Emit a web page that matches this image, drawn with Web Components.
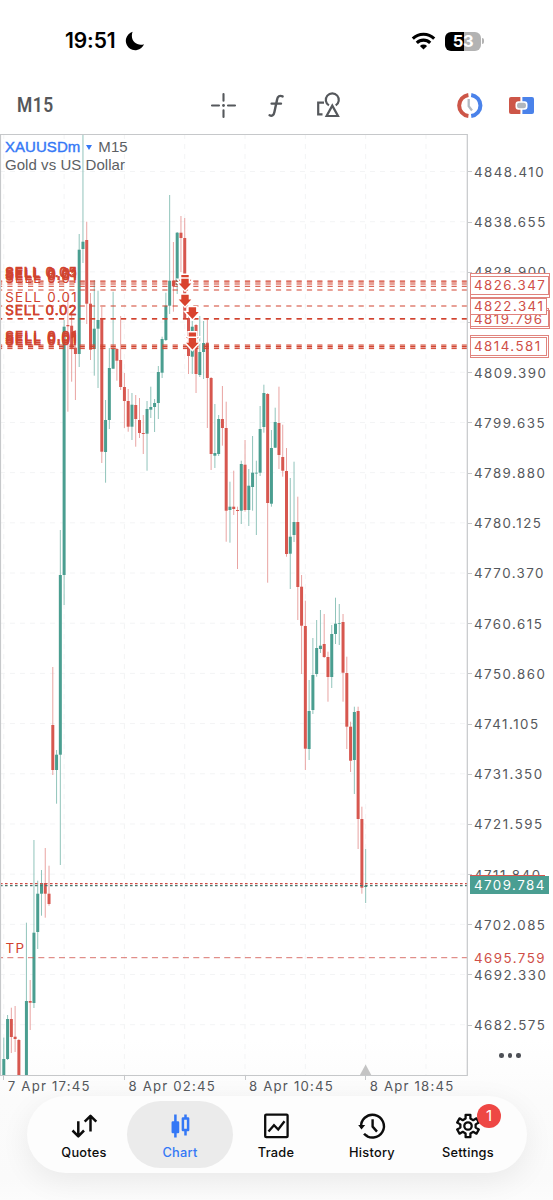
<!DOCTYPE html>
<html lang="en">
<head>
<meta charset="utf-8">
<title>XAUUSDm, M15</title>
<style>
    html, body { margin: 0; padding: 0; }
    body {
        width: 553px;
        height: 1200px;
        overflow: hidden;
        background: #fff;
        font-family: Inter, "Liberation Sans", sans-serif;
        color: #55585c;
    }
</style>
</head>
<body>
<trade-app></trade-app>

<template id="status-tpl">
    <style>
        :host { display: flex; height: 82px; box-sizing: border-box; padding: 0 69px 0 65px; align-items: center; color: #000; }
        .time { font-size: 21px; font-weight: 600; letter-spacing: -0.1px; line-height: 24px; width: 58px; white-space: nowrap; }
        .moon { margin-left: 2px; }
        .spacer { flex: 1; }
        .wifi { margin-right: 9px; }
        .battery {
            width: 36px; height: 19px; border-radius: 6px; text-align: center;
            background: linear-gradient(90deg, #000 19px, #b3b3b3 19px);
            color: #fff; font-size: 16.5px; font-weight: 700; line-height: 19.5px; letter-spacing: -0.4px;
        }
        .nub { width: 2px; height: 6px; border-radius: 0 2px 2px 0; background: #b3b3b3; margin-left: 1px; }
    </style>
    <span class="time">19:51</span>
    <svg class="moon" width="20" height="20" viewBox="0 0 20 20"><path d="M7.6 .8A9.4 9.4 0 1 0 19 13.2C12 15.6 4.4 9.6 7.6 .8Z"/></svg>
    <span class="spacer"></span>
    <svg class="wifi" width="25" height="18" viewBox="0 0 25 18" fill="none" stroke="#000" stroke-width="3.1">
        <path d="M1.8 6.6A15.4 15.4 0 0 1 23.2 6.6"/>
        <path d="M5.8 10.8A9.6 9.6 0 0 1 19.2 10.8"/>
        <path d="M12.5 17.6L8.9 13.9A5.2 5.2 0 0 1 16.1 13.9Z" fill="#000" stroke="none"/>
    </svg>
    <div class="battery">53</div><div class="nub"></div>
</template>

<template id="toolbar-tpl">
    <style>
        :host { display: grid; grid-template-columns: 210px 51px 54px 141px 52px 1fr; height: 52px; align-items: center; }
        .period { margin-top: -6px; padding-left: 17px; font-family: Roboto, sans-serif; font-size: 20.5px; font-weight: 600; letter-spacing: .6px; color: #55575a; line-height: 24px; }
        .period span { display: inline-block; transform: scaleX(.85); transform-origin: 0 50%; }
        svg { display: block; margin-top: -5px; }
    </style>
    <div class="period"><span>M15</span></div>
    <svg width="27" height="27" viewBox="0 0 27 27" stroke="#55585c" stroke-width="2.1" stroke-linecap="round">
        <path d="M2 13.5H9M18 13.5H25M13.5 2V8.8M13.5 18.2V25"/><circle cx="13.5" cy="13.5" r="1.4" fill="#55585c" stroke="none"/>
    </svg>
    <svg width="30" height="27" viewBox="0 0 30 27" fill="none" stroke="#55585c" stroke-width="2.4" stroke-linecap="round">
        <path d="M21.6 4.4C18.6 3 16.7 4.4 16.1 7.4L13.4 20C12.8 23.3 11 24.5 8.6 23.3M10.6 11.6H20"/>
    </svg>
    <svg width="27" height="27" viewBox="0 0 27 27" fill="none" stroke="#55585c" stroke-width="2.2">
        <path d="M9 10.6H3.2V22.4H7.5"/>
        <path d="M13.9 13.4A6.5 6.5 0 1 1 20.7 13.4"/>
        <path d="M17.3 13.6L11.6 24H23Z"/>
    </svg>
    <svg width="27" height="27" viewBox="0 0 27 27" fill="none">
        <path d="M12.4 2.9A10.7 10.7 0 0 0 12.4 24.1" stroke="#cd5648" stroke-width="4"/>
        <path d="M15.2 2.9A10.7 10.7 0 0 1 15.2 24.1" stroke="#4a82ea" stroke-width="4"/>
        <path d="M12.7 7V14.2L16 18.5" stroke="#b2bac3" stroke-width="2.3"/>
    </svg>
    <svg width="27" height="27" viewBox="0 0 27 27">
        <path d="M3 5H12.4V22H3A2 2 0 0 1 1 20V7A2 2 0 0 1 3 5Z" fill="#cd5648"/>
        <path d="M14.4 5H24A2 2 0 0 1 26 7V20A2 2 0 0 1 24 22H14.4Z" fill="#4a82ea"/>
        <rect x="7.5" y="9.3" width="12" height="8.4" rx="3" fill="#fff"/>
        <rect x="9" y="10.8" width="9" height="5.4" rx="2.2" fill="#b0b6bd"/>
    </svg>
</template>

<template id="nav-tpl">
    <style>
        :host {
            display: grid; grid-template-columns: repeat(5, 96px); justify-content: center;
            width: 500px; height: 77px; margin: 0 0 0 27px; border-radius: 39px; box-sizing: border-box; padding-right: 2px;
            background: #fdfdfd; box-shadow: 0 8px 30px rgba(0, 0, 0, .07);
        }
    </style>
    <slot></slot>
</template>

<template id="nav-item-tpl">
    <style>
        :host { position: relative; display: flex; flex-direction: column; align-items: center; color: #0c0c0c; padding-top: 15px; }
        :host([selected]) { color: #3478f6; }
        :host([selected])::before { content: ""; position: absolute; inset: 5px -5px; border-radius: 34px; background: #ebebeb; }
        .icon { position: relative; height: 30px; }
        .label { position: relative; font-size: 12.8px; font-weight: 500; line-height: 16px; margin-top: 3.5px; letter-spacing: .25px; }
        .badge {
            position: absolute; left: 57px; top: 7.5px; width: 24px; height: 24px; border-radius: 50%;
            background: #ee4744; color: #fff; text-align: center; font-size: 15px; line-height: 24px;
        }
        .badge:empty { display: none; }
    </style>
    <div class="icon"><slot></slot></div>
    <div class="label"></div>
    <div class="badge"></div>
</template>

<script>
// pixel geometry of the plot, in page coordinates
const PLOT = { top: 134, right: 467, bottom: 1075.5 };
const FIRST_PRICE = 4848.41;
const PRICE_STEP = 9.755;
const ROW = 50.19;
const ROW_TOP = 171.5;
const COL = 60.31;
const COL_LEFT = 3.8;

// [side, body top, body bottom, high, low], one per bar, null where there is none
const BARS = [
    ['g',1059,1075,1037.6,1075],['g',1019,1059,1015,1060],['r',1019,1037,1007.7,1053],['r',1036.7,1039,1006,1052],
    ['r',1040,1075,1039,1075],null,['g',1001,1075,922.7,1075],['r',1001,1002.7,980,1030],
    ['g',932.7,1003,840,1008],['g',893.7,932,880.7,949],['g',883,893.7,870,915.7],['r',883,893.7,848,917.7],
    ['r',893.7,904,865.7,905.7],['r',725,770,667,775],['g',754.7,770,750,803.7],['g',575,754.7,530,865],
    ['g',326.7,575,320,605],['r',325,326.3,295,411.7],['r',325.7,347.7,315,381.7],['r',347.7,354,330,400],
    ['g',249.7,354,234,367],['g',241.7,249,134,263],['r',240,303.7,221.7,324],['r',303.7,349.7,293,360],
    ['g',328.7,349,280,375.7],['g',320,328.7,290.7,388],['r',318,451.7,307,463],['g',420,452,400,482.7],
    ['g',368,420,348,429],['g',349,368.7,291.7,368.7],['r',349,360.7,348,380.7],['r',360,387,316,390],
    ['r',387,401,373,428],['r',401,426.7,389,431.7],['g',404.7,426.7,393,440],['r',405,419,395,446.7],
    ['r',420,433,398,438],['r',433,434,415,454],['g',409,433.7,401,470.7],['g',407,409.7,386.7,418],
    ['g',403,407,399,432],['g',372,403,366,419],['g',339,372.7,336.7,378],['g',305.7,340,292.7,341],
    ['g',280.7,305.7,195,314],['r',280.7,286,242,311.7],['g',232.7,285,232,294],['r',232.7,238,216,272],
    ['r',238,318,218,319],['r',318,356,310,374],['g',326.7,356.7,321,374],['r',325,374,324,393],
    ['g',352,375,316,377],['g',343,352,321,379],['r',342.7,378,319,428],['r',378,454,377,470],
    ['g',453,455.7,404,468],['g',419,454,415,456],['r',419,428,386,445.7],['r',428,510.7,401.7,541.7],
    ['g',506.7,510,481.7,542.7],['r',506.7,509,470.7,515],['r',510,511,506.7,569],['g',464,510.7,460.7,524],
    ['r',464.7,510,440,511.7],['g',485.7,510,469,526],['g',472.7,487,436,510.7],['g',472.7,473.5,460.7,535],
    ['g',429,472.7,406,476],['g',393,427,384.7,432.7],['r',394,503,393,582.7],['g',448,503.7,430,506.7],
    ['g',422,447.7,407.7,448],['r',423,455,386.7,469],['r',457,470.7,424.7,476.7],['r',471,554,448,556.7],
    ['g',536.7,553.7,478,589],['g',522,535,461.7,542],['r',522,587,496.7,620],['r',586.7,625.7,575,674],
    ['r',626,748.7,600.7,770],['g',711,749,680,760],['g',675,710,638,714],['g',648,674,620,676.7],
    ['g',645.7,649,610,653],['r',644,657,614,658],['r',657,677,651.7,701.7],['g',634,677,625,688],
    ['g',623.7,634,597.7,644],['g',623.3,624,604,645],['r',622,672.7,614,701.7],['r',673,726.7,656.7,749],
    ['r',726.7,760.7,721.7,772],['g',712,760,706.7,794],['r',711,819,706.7,849],['r',819,887.7,806.7,893.7],
    ['g',885.7,887,849,903]
];

// open positions: line y, line width, label, label weight
const ORDERS = [
    [281, 1.2, 'SELL 0.05', .7], [282, 1.2, 'SELL 0.01', .7], [284, 1.2, 'SELL 0.01', .7], [286.3, 1, 'SELL 0.01', 0],
    [290, 1, '', 0],
    [306, 1.2, 'SELL 0.01', 0],
    [318.5, 1.2, 'SELL 0.02', .3], [319.2, 1, 'SELL 0.02', .3],
    [345, 1, 'SELL 0.01', .7], [346.6, 1.8, 'SELL 0.01', .7], [348.6, 1, 'SELL 0.01', .7]
];

const ENTRIES = [[185, 275], [185, 278.7], [185, 294.7], [192.4, 307.3], [192.4, 332.5], [192.4, 338]];

function define(name, tplId) {
    customElements.define(name, class extends HTMLElement {
        constructor() {
            super();
            this.attachShadow({ mode: 'open' }).appendChild(document.getElementById(tplId).content.cloneNode(true));
        }
    });
}

class PriceChart extends HTMLElement {
    constructor() {
        super();
        this.attachShadow({ mode: 'open' }).innerHTML = `<style>
    :host { display: block; position: relative; }
    svg { display: block; }
    .title { position: absolute; left: 5px; top: 3.5px; font: 15px/18.5px "Liberation Sans", Arial, sans-serif; color: #5c5f64; white-space: nowrap; letter-spacing: .05px; }
    .symbol { color: #3478f6; -webkit-text-stroke: .4px #3478f6; }
    .caret { display: inline-block; width: 0; height: 0; border: 3px solid transparent; border-top: 5px solid #3478f6; border-bottom: 0; margin: 0 6px 2px 6px; }
    .order { font-size: 13.4px; fill: #d1432f; stroke: #d1432f; }
</style>
<svg width="468" height="942" viewBox="0 134 468 942">${this.grid()}${this.bars()}${this.orders()}
    <path d="M0 957.7H467" stroke="#cf4f48" stroke-width=".8" stroke-dasharray="6 4.33" stroke-dashoffset="3"/>
    <text class="order" x="5.5" y="953" textLength="18.5" stroke-width="0">TP</text>
    <path d="M0 883.6H467" stroke="#cf4f48" stroke-width="1.3" stroke-dasharray="2.6 2.4"/>
    <path d="M0 885.6H467" stroke="#47776f" stroke-width="1.3" stroke-dasharray="2.6 2.4"/>
    <path d="M365.6 1064.5L371.3 1075H359.9Z" fill="#c4c4c4"/>
    <path d="M.5 134V1075.5H467.3V134.5H0" fill="none" stroke="#c6c8ca" stroke-width="1.2"/>
</svg>
<div class="title"><span class="symbol">XAUUSDm</span><i class="caret"></i>M15<br>Gold vs US Dollar</div>`;
    }

    grid() {
        let d = '';
        for (let i = 0; i < 18; i++) d += `M0 ${ROW_TOP + i * ROW}H${PLOT.right}`;
        for (let i = 0; i < 8; i++) d += `M${COL_LEFT + i * COL} ${PLOT.top}V${PLOT.bottom}`;
        return `<path d="${d}" stroke="#f3f4f5" stroke-width="1" stroke-dasharray="5 5"/>`;
    }

    bars() {
        return BARS.map((b, i) => {
            if (!b) return '';
            const [side, top, bottom, high, low] = b;
            const x = COL_LEFT + i * COL / 16;
            const body = side === 'g' ? '#4a9e90' : '#d7574f';
            const wick = side === 'g' ? '#85bdb3' : '#e69a97';
            return `<path d="M${x.toFixed(2)} ${high}V${low}" stroke="${wick}" stroke-width=".9"/>` +
                `<rect x="${(x - 1.5).toFixed(2)}" y="${top}" width="3" height="${(bottom - top).toFixed(1)}" fill="${body}"/>`;
        }).join('');
    }

    orders() {
        const lines = ORDERS.map(([y, w, text, bold]) =>
            `<path d="M0 ${y}H${PLOT.right}" stroke="#d1432f" stroke-width="${w}" stroke-dasharray="5.2 5.13" stroke-dashoffset="3"/>` +
            (text ? `<text class="order" x="5.2" y="${y - 3.8}" textLength="71.5" stroke-width="${bold}">${text}</text>` : '')
        ).join('');
        const arrows = ENTRIES.map(([x, y]) =>
            `<path d="M${x - 3.7} ${y}h7.4v4.8h2.6l-6.3 6.8l-6.3 -6.8h2.6z" fill="#d9432e" stroke="#fff" stroke-width="2.8" paint-order="stroke"/>`
        ).join('');
        return lines + arrows;
    }
}
customElements.define('price-chart', PriceChart);

class PriceAxis extends HTMLElement {
    constructor() {
        super();
        let rows = '';
        for (let i = 0; i < 18; i++) rows += `<div class="row"><i></i>${(FIRST_PRICE - i * PRICE_STEP).toFixed(3)}</div>`;
        this.attachShadow({ mode: 'open' }).innerHTML = `<style>
    :host { display: block; position: relative; padding-top: 12.9px; font-size: 13.3px; letter-spacing: 1.48px; white-space: nowrap; }
    .row { display: flex; align-items: center; height: ${ROW}px; }
    .row i { width: 4px; height: 1px; background: #c6c8ca; margin-right: 2px; }
    .tag { position: absolute; left: 2px; box-sizing: border-box; width: 77px; height: 18px; line-height: 17px; padding-left: 3px; color: #cf4f48; background: #fff; border: 1px solid #e0837d; }
    .wide { width: 80px; }
    .mid { width: 78.5px; }
    .plain { border-color: transparent; background: none; }
    .bid { width: 79px; background: #4a9e92; border-color: #4a9e92; color: #fff; }
    .edge { height: 10px; border-width: 1px 0 0; border-color: #d7574f; width: 75px; }
    .more { position: absolute; left: 31px; top: 919px; display: flex; gap: 4px; }
    .more b { width: 4.5px; height: 4.5px; border-radius: 50%; background: #4d5056; }
</style>
${rows}
<div class="tag wide" style="top:139px;height:25px"></div>
<div class="tag mid" style="top:142px;height:19px">4826.347</div>
<div class="tag wide" style="top:176px;height:19px">4819.796</div>
<div class="tag mid" style="top:174px;height:19px;background:none"></div>
<div class="tag" style="top:164px;height:17px;line-height:15px">4822.341</div>
<div class="tag mid" style="top:201px;height:23px"></div>
<div class="tag" style="top:203px;height:19px">4814.581</div>
<div class="tag edge" style="top:740.5px"></div>
<div class="tag bid" style="top:742px">4709.784</div>
<div class="tag plain" style="top:814.5px">4695.759</div>
<div class="more"><b></b><b></b><b></b></div>`;
    }
}
customElements.define('price-axis', PriceAxis);

class TimeAxis extends HTMLElement {
    constructor() {
        super();
        const labels = this.getAttribute('labels').split(',');
        this.attachShadow({ mode: 'open' }).innerHTML = `<style>
    :host { display: grid; grid-template-columns: repeat(4, ${COL * 2}px); padding-left: 3.3px; font-size: 13.2px; letter-spacing: 1.2px; line-height: 21px; white-space: nowrap; }
    div { display: flex; }
    i { width: 1px; height: 4px; background: #c6c8ca; margin-right: 3.5px; }
</style>${labels.map(t => `<div><i></i>${t}</div>`).join('')}`;
    }
}

class NavItem extends HTMLElement {
    constructor() {
        super();
        this.attachShadow({ mode: 'open' }).appendChild(document.getElementById('nav-item-tpl').content.cloneNode(true));
    }
    connectedCallback() {
        this.shadowRoot.querySelector('.label').textContent = this.getAttribute('label');
        this.shadowRoot.querySelector('.badge').textContent = this.getAttribute('badge') || '';
    }
}

function gear() {
    // six teeth round the hub, walked clockwise
    let d = '';
    for (let i = 0; i < 6; i++) {
        [[-18, 7.8], [-12, 11.4], [12, 11.4], [18, 7.8]].forEach(([a, r], k) => {
            const t = (i * 60 + a - 90) * Math.PI / 180;
            d += `${i + k ? 'L' : 'M'}${(15 + r * Math.cos(t)).toFixed(2)} ${(15 + r * Math.sin(t)).toFixed(2)}`;
        });
    }
    return `<path d="${d}Z"/><circle cx="15" cy="15" r="3.7"/>`;
}

class TradeApp extends HTMLElement {
    constructor() {
        super();
        const icon = (body, width = 2.3) =>
            `<svg width="30" height="30" viewBox="0 0 30 30" fill="none" stroke="currentColor" stroke-width="${width}" stroke-linejoin="round">${body}</svg>`;
        this.attachShadow({ mode: 'open' }).innerHTML = `<style>
    :host { display: flex; flex-direction: column; height: 1200px; background: linear-gradient(#fff 1040px, #fbfbfb 1100px, #fafafa 1180px, #fcfcfc); }
    .chart { display: grid; grid-template-columns: 468px 85px; grid-template-rows: 942px 20px; }
    time-axis { grid-column: 1 / 3; }
    svg { display: block; }
</style>
<status-bar></status-bar>
<tool-bar></tool-bar>
<div class="chart">
    <price-chart></price-chart>
    <price-axis></price-axis>
    <time-axis labels="7 Apr 17:45,8 Apr 02:45,8 Apr 10:45,8 Apr 18:45"></time-axis>
</div>
<nav-bar>
    <nav-item label="Quotes">${icon('<path d="M9.3 10.3V25M3.5 19.5L9.3 25.3L15 19.5M21.5 20.5V5.2M15.7 10.7L21.5 4.9L27.3 10.7"/>', 2.5)}</nav-item>
    <nav-item label="Chart" selected>${icon('<path d="M10.4 3.5V26.5M20.5 3.5V7M20.5 19.5V24.5"/><rect x="7.8" y="11.5" width="5.2" height="9.5" fill="currentColor"/><rect x="17.9" y="7.5" width="5.2" height="11.5"/>', 2.5)}</nav-item>
    <nav-item label="Trade">${icon('<rect x="4.2" y="3.6" width="22.4" height="22.6" rx="1"/><path d="M7.5 20.5L13 14.3L17.2 18.5L23.5 10.3" stroke-linejoin="miter"/>')}</nav-item>
    <nav-item label="History">${icon('<path d="M4.2 16.5A11.4 11.4 0 1 1 7 22.7M7.4 23A11.4 11.4 0 0 0 10.5 25.2"/><path d="M15.6 8.3V15.6L20 20.6"/><path d="M1.2 14H8.2L4.5 18.5Z" fill="currentColor" stroke="none"/>', 2.4)}</nav-item>
    <nav-item label="Settings" badge="1">${icon(gear())}</nav-item>
</nav-bar>`;
    }
}

define('status-bar', 'status-tpl');
define('tool-bar', 'toolbar-tpl');
define('nav-bar', 'nav-tpl');

customElements.define('trade-app', TradeApp);
customElements.define('nav-item', NavItem);
customElements.define('time-axis', TimeAxis);
</script>
</body>
</html>
